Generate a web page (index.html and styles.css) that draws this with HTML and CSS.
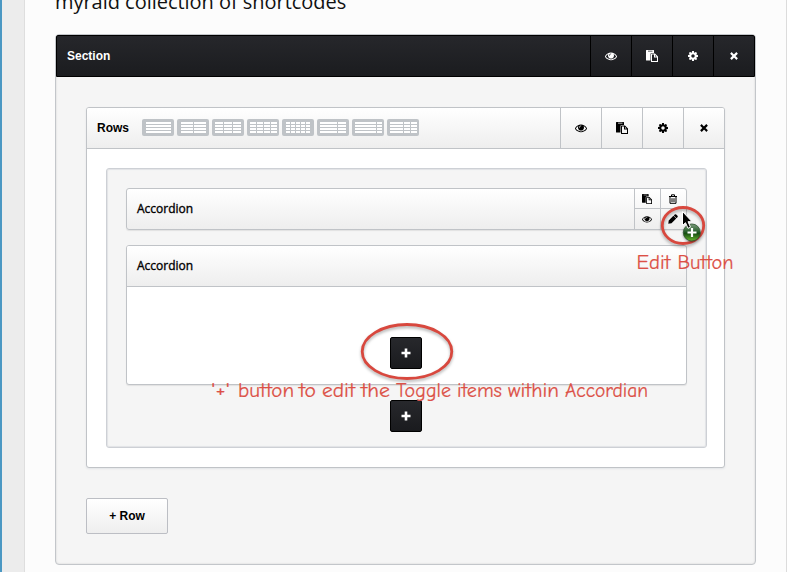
FILE: index.html
```html
<!DOCTYPE html>
<html lang="en">
<head>
<meta charset="utf-8">
<title>Page builder</title>
<link rel="stylesheet" href="styles.css">
</head>
<body>
<svg class="defs" width="0" height="0">
  <symbol id="eye" viewBox="0 0 1792 1792"><path d="M1664 960q-152-236-381-353 61 104 61 225 0 185-131.500 316.500t-316.500 131.500-316.500-131.500-131.500-316.500q0-121 61-225-229 117-381 353 133 205 333.500 326.500t434.500 121.500 434.500-121.500 333.500-326.500zm-720-384q0-20-14-34t-34-14q-125 0-214.500 89.500t-89.500 214.500q0 20 14 34t34 14 34-14 14-34q0-86 61-147t147-61q20 0 34-14t14-34zm848 384q0 34-20 69-140 230-376.500 368.500t-499.500 138.500-499.500-139-376.500-368q-20-35-20-69t20-69q140-229 376.500-368t499.500-139 499.500 139 376.500 368q20 35 20 69z"/></symbol>
  <symbol id="paste" viewBox="0 0 12 12"><path fill-rule="evenodd" d="M.5 0H7.500Q8 0 8 .5V3H5.500Q4.500 3 4.500 4V10.500H.5Q0 10.500 0 10V.5Q0 0 .5 0ZM2 .8V1.600H6.500V.8Z"/><path fill-rule="evenodd" d="M5.500 3.500H9L12 6.500V12H5.500Q5 12 5 11.500V4Q5 3.500 5.500 3.500ZM6 4.500V11H11V7.500H8V4.500ZM9 4.900V6.500H10.600Z"/></symbol>
  <symbol id="cog" viewBox="128 128 1536 1536"><path d="M1152 896q0-106-75-181t-181-75-181 75-75 181 75 181 181 75 181-75 75-181zm512-109v222q0 12-8 23t-20 13l-185 28q-19 54-39 91 35 50 107 138 10 12 10 25t-9 23q-27 37-99 108t-94 71q-12 0-26-9l-138-108q-44 23-91 38-16 136-29 186-7 28-36 28h-222q-14 0-24.500-8.500t-11.500-21.500l-28-184q-49-16-90-37l-141 107q-10 9-25 9-14 0-25-11-126-114-165-168-7-10-7-23 0-12 8-23 15-21 51-66.500t54-70.500q-27-50-41-99l-183-27q-13-2-21-12.500t-8-23.500v-222q0-12 8-23t19-13l186-28q14-46 39-92-40-57-107-138-10-12-10-24 0-10 9-23 26-36 98.500-107.500t94.500-71.500q13 0 26 10l138 107q44-23 91-38 16-136 29-186 7-28 36-28h222q14 0 24.500 8.500t11.500 21.500l28 184q49 16 90 37l142-107q9-9 24-9 13 0 25 10 129 119 165 170 7 8 7 22 0 12-8 23-15 21-51 66.500t-54 70.500q26 50 41 98l183 28q13 2 21 12.500t8 23.500z"/></symbol>
  <symbol id="close" viewBox="0 0 9 9"><path d="M1.900 1.900 7.100 7.100M7.100 1.900 1.900 7.100" stroke="currentColor" stroke-width="2.500" stroke-linecap="square"/></symbol>
  <symbol id="trash" viewBox="0 0 10 10"><path d="M1 2.500H9M3.500 2V.8H6.500V2M2 3V9.300H8V3M4 4.200V8M6 4.200V8" fill="none" stroke="currentColor"/></symbol>
  <symbol id="pencil" viewBox="0 0 10 10"><path d="M.3 9.700 .7 6.500 5.400 1.800 8.200 4.600 3.500 9.300ZM5.800 1.400 7 .3Q7.600-.1 8.200.5L9.500 1.800Q10 2.400 9.600 3L8.600 4.200Z"/></symbol>
  <symbol id="plus" viewBox="0 0 10 10"><path d="M3.700.5H6.300V3.700H9.500V6.300H6.300V9.500H3.700V6.300H.5V3.700H3.700Z"/></symbol>
</svg>
<div class="page">
  <main class="content">
    <h1 class="intro">myraid collection of shortcodes</h1>
    <section class="section">
      <header class="bar bar-dark">
        <span class="title">Section</span>
        <span class="tool"><svg class="i12"><use href="#eye"/></svg></span>
        <span class="tool"><svg class="i12"><use href="#paste"/></svg></span>
        <span class="tool"><svg class="i10"><use href="#cog"/></svg></span>
        <span class="tool"><svg class="i8"><use href="#close"/></svg></span>
      </header>
      <div class="section-body">
        <div class="rows">
          <header class="bar bar-light">
            <span class="title">Rows</span>
            <span class="layouts">
              <svg class="layout"><rect class="frame" width="32" height="17" rx="2"/><path class="lines" d="M4 4H29M4 7H29M4 10H29M4 13H29"/></svg>
              <svg class="layout"><rect class="frame" width="32" height="17" rx="2"/><path class="lines" d="M4 4H29M4 7H29M4 10H29M4 13H29"/><path class="cols" d="M16.500 3V14"/></svg>
              <svg class="layout"><rect class="frame" width="32" height="17" rx="2"/><path class="lines" d="M3 4H29M3 7H29M3 10H29M3 13H29"/><path class="cols" d="M11.500 3V14M20.500 3V14"/></svg>
              <svg class="layout"><rect class="frame" width="32" height="17" rx="2"/><path class="lines" d="M3 4H30M3 7H30M3 10H30M3 13H30"/><path class="cols" d="M9.500 3V14M16.500 3V14M23.500 3V14"/></svg>
              <svg class="layout"><rect class="frame" width="32" height="17" rx="2"/><path class="lines" d="M4 4H28M4 7H28M4 10H28M4 13H28"/><path class="cols" d="M8.500 3V14M13.500 3V14M18.500 3V14M23.500 3V14"/></svg>
              <svg class="layout"><rect class="frame" width="32" height="17" rx="2"/><path class="lines" d="M3 4H29M3 7H29M3 10H29M3 13H29"/><path class="cols" d="M20.500 3V14"/></svg>
              <svg class="layout"><rect class="frame" width="32" height="17" rx="2"/><path class="lines" d="M3 4H30M3 7H30M3 10H30M3 13H30"/><path class="cols" d="M24.500 3V14"/></svg>
              <svg class="layout"><rect class="frame" width="32" height="17" rx="2"/><path class="lines" d="M3 4H30M3 7H30M3 10H30M3 13H30"/><path class="cols" d="M16.500 3V14M23.500 3V14"/></svg>
            </span>
            <span class="tool"><svg class="i12"><use href="#eye"/></svg></span>
            <span class="tool"><svg class="i12"><use href="#paste"/></svg></span>
            <span class="tool"><svg class="i10"><use href="#cog"/></svg></span>
            <span class="tool"><svg class="i8"><use href="#close"/></svg></span>
          </header>
          <div class="rows-body">
            <div class="column">
              <div class="element">
                <span class="name">Accordion</span>
                <div class="mini-tools">
                  <span><svg class="i10"><use href="#paste"/></svg></span>
                  <span><svg class="i10"><use href="#trash"/></svg></span>
                  <span><svg class="i10"><use href="#eye"/></svg></span>
                  <span><svg class="i10"><use href="#pencil"/></svg></span>
                </div>
              </div>
              <div class="panel">
                <div class="panel-head">Accordion</div>
                <div class="panel-body"><button class="add"><svg class="i10"><use href="#plus"/></svg></button></div>
              </div>
              <button class="add"><svg class="i10"><use href="#plus"/></svg></button>
            </div>
          </div>
        </div>
        <button class="add-row">+ Row</button>
      </div>
    </section>
  </main>
</div>
<svg class="notes" width="787" height="572" viewBox="0 0 787 572">
  <defs>
    <linearGradient id="green" x2="0" y2="1"><stop offset="0" stop-color="#7b9a7c"/><stop offset=".45" stop-color="#29602c"/><stop offset=".55" stop-color="#164d12"/><stop offset="1" stop-color="#67b52c"/></linearGradient>
  </defs>
  <g class="ring">
    <ellipse cx="407" cy="351.500" rx="44.800" ry="27"/>
    <ellipse cx="683" cy="225.500" rx="20.700" ry="18"/>
  </g>
  <circle class="badge" cx="691.800" cy="232.500" r="8.500" fill="url(#green)"/>
  <path d="M692 228V237M687.500 232.500H696.500" stroke="#fff" stroke-width="2.200"/>
  <path class="cursor" d="M682.500 211.500V225.500L685.500 222.700 688 228.300 690.500 227.200 688 221.700H692Z"/>
  <g class="handwriting">
    <text x="636.500" y="269" textLength="34" lengthAdjust="spacingAndGlyphs">Edit</text>
    <text x="677.500" y="269" textLength="56" lengthAdjust="spacingAndGlyphs">Button</text>
    <text x="211" y="397" textLength="19" lengthAdjust="spacingAndGlyphs">'+'</text>
    <text x="238" y="397" textLength="56" lengthAdjust="spacingAndGlyphs">button</text>
    <text x="299" y="397" textLength="17" lengthAdjust="spacingAndGlyphs">to</text>
    <text x="322" y="397" textLength="33" lengthAdjust="spacingAndGlyphs">edit</text>
    <text x="361" y="397" textLength="29" lengthAdjust="spacingAndGlyphs">the</text>
    <text x="396" y="397" textLength="55" lengthAdjust="spacingAndGlyphs">Toggle</text>
    <text x="457" y="397" textLength="45" lengthAdjust="spacingAndGlyphs">items</text>
    <text x="508" y="397" textLength="51" lengthAdjust="spacingAndGlyphs">within</text>
    <text x="565" y="397" textLength="83" lengthAdjust="spacingAndGlyphs">Accordian</text>
  </g>
</svg>
</body>
</html>
```
FILE: styles.css
```css
* { box-sizing: border-box; }
html, body { margin: 0; height: 100%; overflow: hidden; }
body { background: #ececec; font-family: "Open Sans", sans-serif; color: #000; }
.defs { position: absolute; }
.page { display: flow-root; height: 572px; padding-left: 22px; border-left: 2px solid #4b98c3; }
.content { display: flow-root; height: 572px; padding: 0 30px; border-left: 1px solid #dedede; border-right: 1px solid #dcdcdc; background: #fcfcfc; }
.intro { margin: -12px 0 0; height: 46px; font-size: 20px; line-height: 27px; letter-spacing: -.03px; font-weight: 400; color: #111; white-space: nowrap; }
.section { width: 701px; height: 531px; border: 1px solid #c3c6ca; border-radius: 4px; background: #f5f5f5; box-shadow: inset 0 0 2px #ccc; }
.bar { display: flex; align-items: center; font: bold 12px "Liberation Sans", sans-serif; }
.bar .title { flex: 1; }
.bar-dark { height: 42px; padding-left: 10px; border: 1px solid #000; border-radius: 2px 2px 0 0; background: linear-gradient(#26272b, #1b1c1f); color: #fff; }
.tool { display: flex; align-items: center; justify-content: center; width: 41px; height: 100%; border-left: 1px solid #c0c3c7; }
.bar-dark .tool { border-color: #000; }
svg { fill: currentColor; }
.i12 { width: 12px; height: 12px; }
.i10 { width: 10px; height: 10px; }
.i8 { width: 8px; height: 8px; }
.section-body { padding: 30px; }
.rows { width: 639px; height: 361px; border: 1px solid #c0c3c7; border-radius: 3px; background: #fff; box-shadow: 0 1px 2px #e2e4e7; }
.bar-light { height: 41px; padding-left: 10px; border-bottom: 1px solid #c0c3c7; background: linear-gradient(#fff, #eee); border-radius: 2px 2px 0 0; }
.bar-light .title { flex: none; width: 45px; }
.layouts { flex: 1; display: flex; gap: 3px; padding-bottom: 1px; }
.layout { width: 32px; height: 17px; }
.frame { fill: #bfc3c7; }
.lines { stroke: #fff; stroke-width: 2; }
.cols { stroke: #bfc3c7; }
.rows-body { padding: 19px 17px 0 19px; }
.column { width: 601px; height: 280px; padding: 19px; border: 1px solid #cdd0d5; border-radius: 3px; background: #f5f5f5; box-shadow: inset 0 0 1px 1px #e2e3e6; display: flex; flex-direction: column; align-items: center; }
.element { display: flex; flex: none; width: 561px; height: 42px; border: 1px solid #c0c3c7; border-radius: 3px; background: linear-gradient(#fff, #eee); box-shadow: 0 1px 1px #e2e2e2; }
.name, .panel-head { font-size: 12px; line-height: 40px; padding-left: 10px; -webkit-text-stroke: .35px #000; }
.name { flex: 1; }
.mini-tools { display: grid; grid-template: 20px 20px / 26px 26px; width: 52px; }
.mini-tools span { display: flex; align-items: center; justify-content: center; padding-right: 1px; border-left: 1px solid #c0c3c7; border-bottom: 1px solid #c0c3c7; }
.mini-tools span:nth-child(n+3) { border-bottom: 0; }
.panel { flex: none; width: 561px; height: 140px; margin: 15px 0; border: 1px solid #c0c3c7; border-radius: 3px; background: #fff; box-shadow: 0 1px 1px #e2e2e2; }
.panel-head { height: 41px; border-bottom: 1px solid #c0c3c7; background: linear-gradient(#fff, #eee); border-radius: 2px 2px 0 0; }
.panel-body { display: flex; justify-content: center; padding-top: 50px; }
.add { display: flex; align-items: center; justify-content: center; width: 32px; height: 32px; margin: 0 1px 0 0; padding: 0; border: 1px solid #000; border-radius: 2px; background: linear-gradient(#27282c, #1a1b1e); color: #fff; flex: none; }
.add-row { display: block; width: 82px; height: 36px; margin-top: 30px; padding: 0; border: 1px solid #bcbec4; border-radius: 2px; background: linear-gradient(#fff, #eee); color: #000; font: bold 12px "Liberation Sans", sans-serif; }
.notes { position: absolute; left: 0; top: 0; pointer-events: none; }
.ring { fill: none; stroke: #d8483e; stroke-width: 2.8; filter: drop-shadow(0 2px 1.5px rgba(0,0,0,.3)); }
.badge { stroke: #2e5430; stroke-width: .8; filter: drop-shadow(0 1px 1px rgba(0,0,0,.4)); }
.cursor { fill: #000; stroke: #fff; stroke-width: 1; }
.handwriting { font: 20px "Comic Sans MS", "Comic Neue", Lato, sans-serif; font-variant-ligatures: none; fill: #dc5046; stroke: #dc5046; stroke-width: .2; }
```
